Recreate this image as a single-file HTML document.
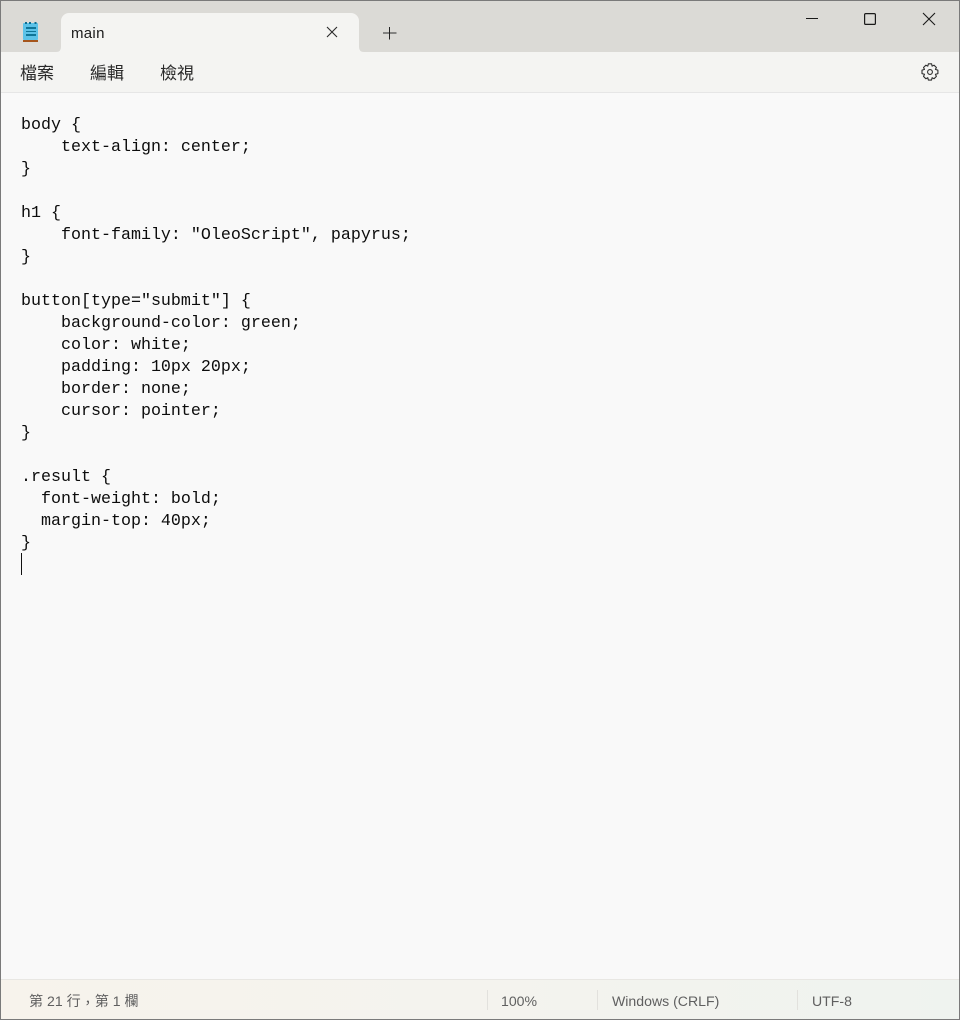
<!DOCTYPE html>
<html lang="zh-Hant">
<head>
<meta charset="utf-8">
<title>main</title>
<style>
html,body{margin:0;padding:0;width:960px;height:1020px;overflow:hidden;background:#f9f9f9}
#win{position:relative;width:960px;height:1020px;overflow:hidden;background:#f9f9f9;font-family:"Liberation Sans","Noto Sans CJK TC",sans-serif}
.abs{position:absolute}
#titlebar{left:0;top:0;width:960px;height:52px;background:#dbdad6}
#tab{left:61px;top:13px;width:298px;height:39px;background:#f4f4f2;border-radius:8px 8px 0 0}
#tabname{left:71px;top:25px;font-size:15px;line-height:18px;color:#1b1b1b;letter-spacing:.3px}
#menubar{left:0;top:52px;width:960px;height:40px;background:#f4f4f2;border-bottom:1px solid #e6e6e6}
.menu{top:63px;font-size:17px;line-height:22px;color:#2a2a2a}
#code{left:21px;top:115px;margin:0;font-family:"Liberation Mono",monospace;font-size:16.67px;line-height:22px;color:#0c0c0c;white-space:pre}
#caret{left:21px;top:553px;width:1px;height:22px;background:#111}
#status{left:0;top:979px;width:960px;height:40px;background:linear-gradient(90deg,#f7f3ec 0%,#f4f3ee 50%,#eff3ef 100%);border-top:1px solid #e8e7e3}
.st{top:992px;font-size:14.1px;line-height:18px;color:#5f5f5f;white-space:nowrap}
.sep{top:990px;width:1px;height:20px;background:#e2e1dd}
#frame{left:0;top:0;width:958px;height:1018px;border:1px solid #7a7a7a;pointer-events:none}
svg{position:absolute;overflow:visible}
</style>
</head>
<body>
<div id="win">
  <div class="abs" id="titlebar"></div>
  <div class="abs" id="tab"></div>
  <svg style="left:56px;top:47px" width="5" height="5"><path d="M0 5Q5 5 5 0V5Z" fill="#f4f4f2"/></svg>
  <svg style="left:359px;top:47px" width="5" height="5"><path d="M5 5Q0 5 0 0V5Z" fill="#f4f4f2"/></svg>

  <svg style="left:15px;top:15px" width="32" height="32" viewBox="0 0 32 32">
    <rect x="8" y="8" width="15" height="17" rx="1" fill="#5cc2e8"/>
    <rect x="10" y="7" width="2" height="2" fill="#0e6d91"/>
    <rect x="14" y="7" width="2" height="2" fill="#0e6d91"/>
    <rect x="19.5" y="7" width="2" height="2" fill="#0e6d91"/>
    <rect x="11" y="12" width="10" height="2" fill="#0f7598"/>
    <rect x="11" y="16" width="10" height="1" fill="#0f7598"/>
    <rect x="11" y="19" width="10" height="2" fill="#0f7598"/>
    <rect x="8" y="25" width="15" height="2" fill="#a5551c"/>
  </svg>

  <div class="abs" id="tabname">main</div>
  <svg style="left:326px;top:26px" width="12" height="12" viewBox="0 0 12 12"><path d="M1 1L11 11M11 1L1 11" stroke="#2a2a2a" stroke-width="1.1" fill="none"/></svg>
  <svg style="left:383px;top:27px" width="14" height="13" viewBox="0 0 14 13"><path d="M0 6H13.5" stroke="#555" stroke-width="1.3" fill="none"/><path d="M6.5 0V12.5" stroke="#222" stroke-width="1" fill="none"/></svg>

  <svg style="left:806px;top:18px" width="12" height="1"><rect width="12" height="1" fill="#1a1a1a"/></svg>
  <svg style="left:864px;top:13px" width="12" height="12" viewBox="0 0 12 12"><rect x="0.6" y="0.6" width="10.8" height="10.8" rx="1.2" fill="none" stroke="#1a1a1a" stroke-width="1.2"/></svg>
  <svg style="left:923px;top:13px" width="12" height="12" viewBox="0 0 12 12"><path d="M0 0L12 12M12 0L0 12" stroke="#1a1a1a" stroke-width="1.1" fill="none"/></svg>

  <div class="abs" id="menubar"></div>
  <div class="abs menu" style="left:20px">檔案</div>
  <div class="abs menu" style="left:90px">編輯</div>
  <div class="abs menu" style="left:160px">檢視</div>

  <svg style="left:921px;top:63px" width="18" height="18" viewBox="0 0 18 18">
    <path d="M7.4 0.8H10.6L11.1 3.1L13 2.2L15.4 4.5L14.4 6.4L16.9 7.2V10.6L14.4 11.3L15.4 13.4L13.1 15.7L11.1 14.7L10.5 17.1H7.4L6.8 14.7L4.8 15.7L2.5 13.4L3.5 11.3L1 10.6V7.2L3.5 6.4L2.5 4.5L4.9 2.2L6.8 3.1Z" fill="none" stroke="#2e2e2e" stroke-width="1.1" stroke-linejoin="round"/>
    <circle cx="9" cy="9" r="2.4" fill="none" stroke="#2e2e2e" stroke-width="1.1"/>
  </svg>

  <pre class="abs" id="code">body {
    text-align: center;
}

h1 {
    font-family: "OleoScript", papyrus;
}

button[type="submit"] {
    background-color: green;
    color: white;
    padding: 10px 20px;
    border: none;
    cursor: pointer;
}

.result {
  font-weight: bold;
  margin-top: 40px;
}</pre>
  <div class="abs" id="caret"></div>

  <div class="abs" id="status"></div>
  <div class="abs st" style="left:29px">第 21 行<span style="position:relative;top:2px">，</span>第 1 欄</div>
  <div class="abs sep" style="left:487px"></div>
  <div class="abs st" style="left:501px">100%</div>
  <div class="abs sep" style="left:597px"></div>
  <div class="abs st" style="left:612px">Windows (CRLF)</div>
  <div class="abs sep" style="left:797px"></div>
  <div class="abs st" style="left:812px">UTF-8</div>

  <div class="abs" id="frame"></div>
</div>
</body>
</html>
